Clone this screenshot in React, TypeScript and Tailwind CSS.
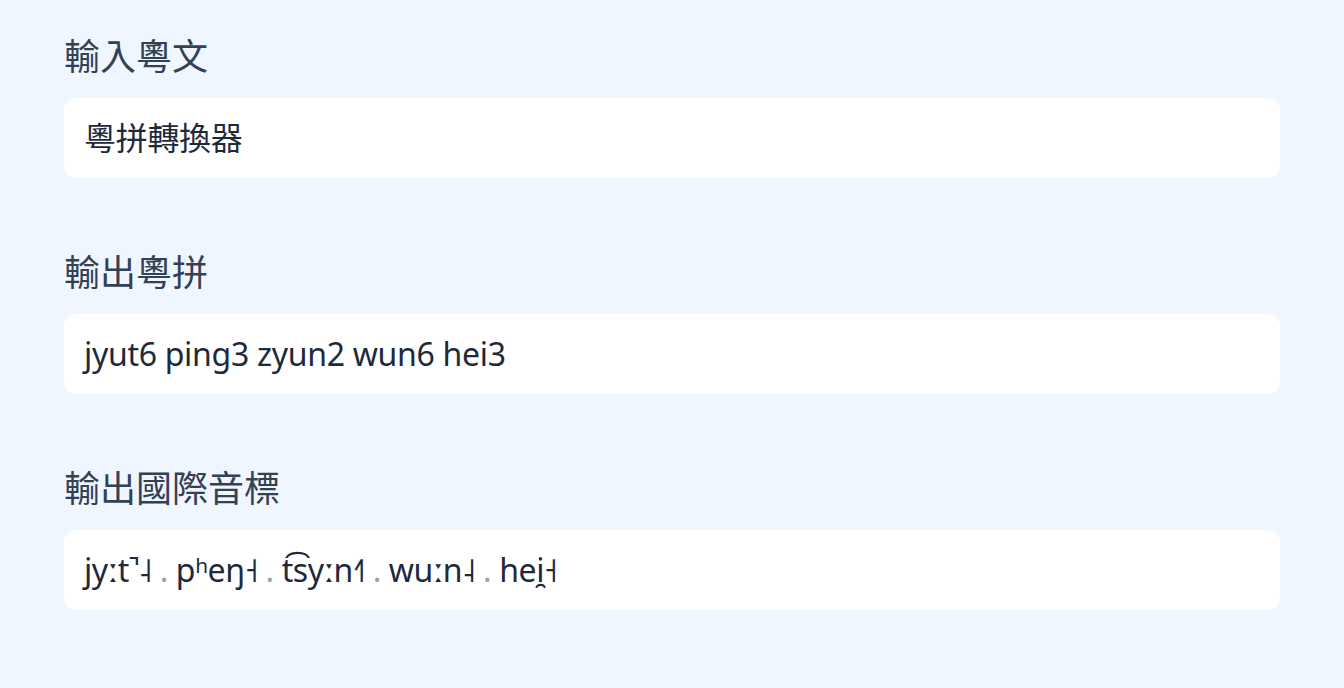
import React from "react";

const syllables = ["jyːt̚˨", "pʰeŋ˧", "t͡syːn˧˥", "wuːn˨", "hei̯˧"];

function Field({ label, children }: { label: string; children: React.ReactNode }) {
  return (
    <div className="flex flex-col">
      <label className="text-[36px] leading-[40px] text-[#334155]">{label}</label>
      <div className="mt-[21px] flex h-[80px] items-center rounded-xl bg-white px-5 text-[32px] tracking-[-0.3px] text-[#1e293b]">
        {children}
      </div>
    </div>
  );
}

export default function App() {
  return (
    <div
      className="min-h-screen w-full bg-[#eff6ff] px-16 pt-[37px]"
      style={{ fontFamily: '"Noto Sans", "Noto Sans CJK TC", sans-serif' }}
    >
      <div className="flex flex-col gap-[75px]">
        <Field label="輸入粵文">粵拼轉換器</Field>
        <Field label="輸出粵拼">jyut6 ping3 zyun2 wun6 hei3</Field>
        <Field label="輸出國際音標">
          <span className="whitespace-pre tracking-[-0.4px]">
            {syllables.map((s, i) => (
              <React.Fragment key={i}>
                {i > 0 && <span className="text-[#94a3b8]"> . </span>}
                <span>{s}</span>
              </React.Fragment>
            ))}
          </span>
        </Field>
      </div>
    </div>
  );
}
